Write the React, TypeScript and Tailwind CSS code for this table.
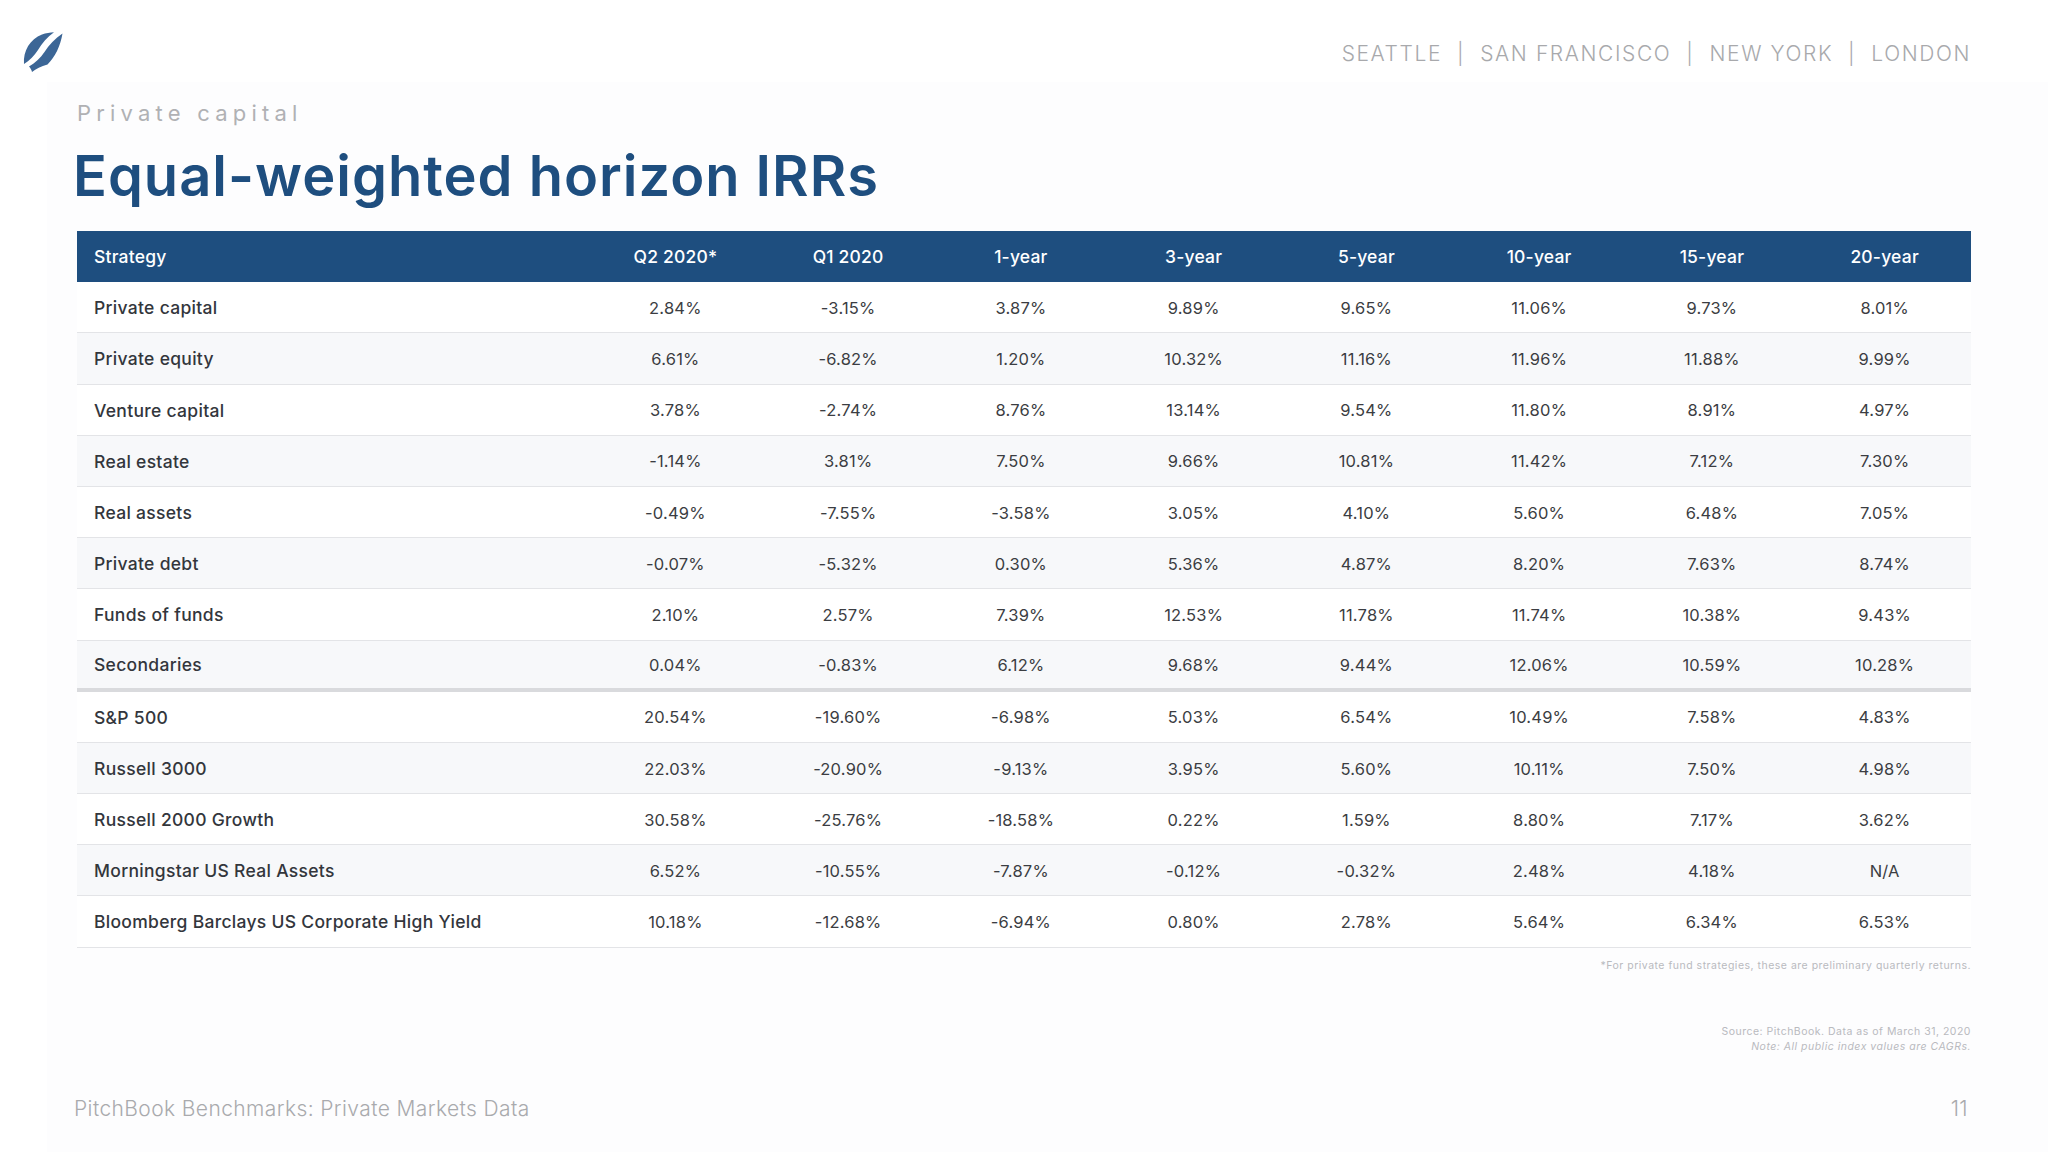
import React from "react";

const rows: [string, string[]][] = [
  ["Private capital", ["2.84%", "-3.15%", "3.87%", "9.89%", "9.65%", "11.06%", "9.73%", "8.01%"]],
  ["Private equity", ["6.61%", "-6.82%", "1.20%", "10.32%", "11.16%", "11.96%", "11.88%", "9.99%"]],
  ["Venture capital", ["3.78%", "-2.74%", "8.76%", "13.14%", "9.54%", "11.80%", "8.91%", "4.97%"]],
  ["Real estate", ["-1.14%", "3.81%", "7.50%", "9.66%", "10.81%", "11.42%", "7.12%", "7.30%"]],
  ["Real assets", ["-0.49%", "-7.55%", "-3.58%", "3.05%", "4.10%", "5.60%", "6.48%", "7.05%"]],
  ["Private debt", ["-0.07%", "-5.32%", "0.30%", "5.36%", "4.87%", "8.20%", "7.63%", "8.74%"]],
  ["Funds of funds", ["2.10%", "2.57%", "7.39%", "12.53%", "11.78%", "11.74%", "10.38%", "9.43%"]],
  ["Secondaries", ["0.04%", "-0.83%", "6.12%", "9.68%", "9.44%", "12.06%", "10.59%", "10.28%"]],
  ["S&P 500", ["20.54%", "-19.60%", "-6.98%", "5.03%", "6.54%", "10.49%", "7.58%", "4.83%"]],
  ["Russell 3000", ["22.03%", "-20.90%", "-9.13%", "3.95%", "5.60%", "10.11%", "7.50%", "4.98%"]],
  ["Russell 2000 Growth", ["30.58%", "-25.76%", "-18.58%", "0.22%", "1.59%", "8.80%", "7.17%", "3.62%"]],
  ["Morningstar US Real Assets", ["6.52%", "-10.55%", "-7.87%", "-0.12%", "-0.32%", "2.48%", "4.18%", "N/A"]],
  ["Bloomberg Barclays US Corporate High Yield", ["10.18%", "-12.68%", "-6.94%", "0.80%", "2.78%", "5.64%", "6.34%", "6.53%"]],
];

const headers = ["Q2 2020*", "Q1 2020", "1-year", "3-year", "5-year", "10-year", "15-year", "20-year"];

function Logo() {
  return (
    <svg width="42" height="42" viewBox="22 31 42 42" className="block">
      <path
        d="M24,64 C23,51 30,39 42,34.5 C46,33.2 50,32.5 54,32.3 C47.5,37 42,43 38,50 C34,56 29.5,60.5 24,64 Z"
        fill="#3c6696"
      />
      <path
        d="M62.5,33.5 C55,38.5 49,45 44.5,52 C40.5,58 35.5,62.5 29,66.5 C30.6,68.3 31.6,70 32,72 C36,68.8 41,66.5 47.5,64.5 C55,57 60.5,46 62.5,33.5 Z"
        fill="#3c6696"
      />
    </svg>
  );
}

export default function App() {
  return (
    <div
      className="w-[2048px] h-[1152px] bg-white overflow-hidden flex flex-col"
      style={{ fontFamily: "Inter, 'Noto Sans', sans-serif" }}
    >
      <div className="flex justify-between items-start h-[82px]">
        <div className="pl-[22px] pt-[31px]">
          <Logo />
        </div>
        <div className="pr-[77px] pt-[43px] text-[21px] leading-none font-light tracking-[1.6px] text-[#a8a9ac] whitespace-pre">
          {"SEATTLE  |  SAN FRANCISCO  |  NEW YORK  |  LONDON"}
        </div>
      </div>
      <div className="flex-1 ml-[47px] bg-[#fdfdfe] flex flex-col pl-[30px] pr-[77px]">
        <div className="mt-[20px] text-[22px] leading-none tracking-[5.2px] text-[#b0b1b4] font-normal">
          Private capital
        </div>
        <h1 className="mt-[24px] -ml-[4px] text-[56px] leading-none font-semibold tracking-[1px] text-[#1e4e7f]">
          Equal-weighted horizon IRRs
        </h1>
        <div className="mt-[27px] w-[1894px]">
          <div className="grid grid-cols-[512px_repeat(8,1fr)] h-[51.2px] items-center bg-[#1e4e7f] text-white text-[17.5px] tracking-[0.2px] font-medium">
            <div className="pl-[17px] pt-[2px]">Strategy</div>
            {headers.map((h) => (
              <div key={h} className="text-center pt-[2px]">
                {h}
              </div>
            ))}
          </div>
          {rows.map(([label, vals], i) => (
            <div
              key={label}
              className={
                "grid grid-cols-[512px_repeat(8,1fr)] h-[51.2px] items-center pt-[2px] " +
                (i % 2 === 0 ? "bg-white " : "bg-[#f7f8fa] ") +
                (i === 7 ? "border-b-[4px] border-[#d9dadd]" : "border-b border-[#e3e4e7]")
              }
            >
              <div className="pl-[17px] text-[17.5px] tracking-[0.3px] font-medium text-[#33363c]">{label}</div>
              {vals.map((v, j) => (
                <div key={j} className="text-center text-[16.5px] tracking-[0.2px] text-[#3b3d42]">
                  {v}
                </div>
              ))}
            </div>
          ))}
        </div>
        <div className="w-[1894px] flex flex-col items-end">
          <div className="mt-[13px] text-[10.5px] leading-none tracking-[0.5px] text-[#b9babe]">
            *For private fund strategies, these are preliminary quarterly returns.
          </div>
          <div className="mt-[53px] text-[10.5px] leading-[15px] tracking-[0.5px] text-[#b9babe] text-right">
            <div>Source: PitchBook. Data as of March 31, 2020</div>
            <div className="italic">Note: All public index values are CAGRs.</div>
          </div>
        </div>
        <div className="w-[1894px] mt-[44px] flex justify-between items-center -ml-[3px] text-[21px] tracking-[0.4px] leading-none font-light text-[#a9aaad]">
          <div>PitchBook Benchmarks: Private Markets Data</div>
          <div>11</div>
        </div>
      </div>
    </div>
  );
}
